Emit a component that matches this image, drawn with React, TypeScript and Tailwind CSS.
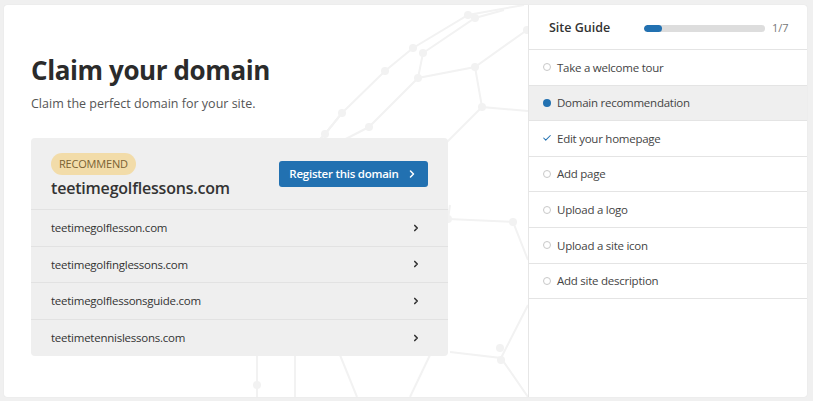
import { ChevronRight, Check } from "lucide-react";

const alternatives = [
  "teetimegolflesson.com",
  "teetimegolfinglessons.com",
  "teetimegolflessonsguide.com",
  "teetimetennislessons.com",
];

const steps = [
  { label: "Take a welcome tour", state: "todo" },
  { label: "Domain recommendation", state: "active" },
  { label: "Edit your homepage", state: "done" },
  { label: "Add page", state: "todo" },
  { label: "Upload a logo", state: "todo" },
  { label: "Upload a site icon", state: "todo" },
  { label: "Add site description", state: "todo" },
];

function Network() {
  const stroke = "#f2f2f2";
  const dots: [number, number][] = [
    [464, 10], [471, 13], [523, 25], [409, 43], [419, 48], [381, 66], [414, 73],
    [471, 62], [478, 102], [338, 108], [365, 122], [321, 129], [444, 214],
    [509, 217], [496, 343], [253, 380], [497, 355],
  ];
  return (
    <svg
      className="pointer-events-none absolute inset-0"
      width="524"
      height="392"
      viewBox="0 0 524 392"
    >
      <g stroke={stroke} strokeWidth="2" fill="none">
        <polyline points="321,129 338,108 381,66 409,43 464,10 520,0" />
        <polyline points="338,108 321,129 300,150" />
        <polyline points="365,122 414,73 471,62 523,25" />
        <polyline points="414,73 419,48 471,13 500,5" />
        <polyline points="471,62 478,102 524,106" />
        <polyline points="478,102 440,140" />
        <polyline points="444,214 509,217 524,255" />
        <polyline points="444,214 446,200" />
        <polyline points="365,122 330,140" />
        <polyline points="253,350 253,392" />
        <polyline points="291,350 291,392" />
        <polyline points="336,350 353,392" />
        <polyline points="426,350 406,392" />
        <polyline points="446,347 497,353 524,392" />
        <polyline points="497,353 524,300" />
      </g>
      <g fill={stroke}>
        {dots.map(([x, y], i) => (
          <circle key={i} cx={x} cy={y} r="4" />
        ))}
      </g>
    </svg>
  );
}

function StepIcon({ state }: { state: string }) {
  if (state === "done")
    return <Check className="h-3 w-3 text-[#2271b1]" strokeWidth={2.5} />;
  if (state === "active")
    return <span className="block h-2 w-2 rounded-full bg-[#2271b1]" />;
  return <span className="block h-2 w-2 rounded-full border border-[#c8c8c8]" />;
}

export default function App() {
  return (
    <div
      className="h-[401px] w-[813px] bg-[#f0f0f0] pb-[4px] pl-[4px] pr-[6px] pt-[5px] text-[#333]"
      style={{ fontFamily: '"Open Sans", "Noto Sans", sans-serif' }}
    >
      <div className="flex h-full overflow-hidden rounded-[3px] bg-white shadow-[0_0_1px_rgba(0,0,0,0.12)]">
        {/* left: claim domain */}
        <div className="relative w-[524px] shrink-0 px-[27px] pt-[49px]">
          <Network />
          <div className="relative">
            <h1 className="text-[26px] font-bold leading-[32px] tracking-[-0.4px] text-[#2b2b2b]">
              Claim your domain
            </h1>
            <p className="mt-[9px] text-[12.5px] leading-[18px] text-[#555]">
              Claim the perfect domain for your site.
            </p>
            <div className="mt-[25px] w-[417px] overflow-hidden rounded-[4px] bg-[#efefef]">
              <div className="flex items-center justify-between border-b border-[#e2e2e2] pb-[9px] pl-[20px] pr-[20px] pt-[12px]">
                <div>
                  <span className="inline-block rounded-full bg-[#f2dca9] px-[8px] py-[3px] text-[11px] uppercase leading-[16px] tracking-[-0.2px] text-[#7a6233]">
                    Recommend
                  </span>
                  <div className="mt-[1px] text-[16px] font-semibold leading-[24px] tracking-[-0.2px] text-[#333]">
                    teetimegolflessons.com
                  </div>
                </div>
                <button className="mt-[-3px] flex h-[26px] w-[149px] items-center justify-center gap-[7px] rounded-[3px] bg-[#2271b1] text-[11.5px] font-semibold tracking-[-0.25px] text-white">
                  Register this domain
                  <ChevronRight className="h-3 w-3" strokeWidth={3} />
                </button>
              </div>
              {alternatives.map((d, i) => (
                <div
                  key={d}
                  className={`flex h-[36.5px] items-center justify-between pl-[20px] pr-[27px] text-[11.5px] tracking-[-0.25px] text-[#333] ${
                    i < alternatives.length - 1 ? "border-b border-[#e2e2e2]" : ""
                  }`}
                >
                  <span>{d}</span>
                  <ChevronRight className="h-[10px] w-[10px] text-[#333]" strokeWidth={4} />
                </div>
              ))}
            </div>
          </div>
        </div>

        {/* right: site guide */}
        <div className="flex-1 border-l border-[#e6e6e6]">
          <div className="flex h-[45px] items-center border-b border-[#e4e4e4] pl-[20px] pr-[20px] pt-[3px]">
            <span className="w-[95px] text-[12.5px] font-semibold text-[#333]">Site Guide</span>
            <div className="h-[7px] w-[121px] overflow-hidden rounded-full bg-[#dddddd]">
              <div className="h-full w-[18px] rounded-full bg-[#2271b1]" />
            </div>
            <span className="ml-[7px] text-[11px] text-[#777]">1/7</span>
          </div>
          {steps.map((s) => (
            <div
              key={s.label}
              className={`flex h-[35.6px] items-center gap-[5px] border-b border-[#e4e4e4] pl-[13px] text-[11.5px] tracking-[-0.25px] text-[#444] ${
                s.state === "active" ? "bg-[#efefef]" : ""
              }`}
            >
              <span className="flex w-[10px] justify-center">
                <StepIcon state={s.state} />
              </span>
              {s.label}
            </div>
          ))}
        </div>
      </div>
    </div>
  );
}
